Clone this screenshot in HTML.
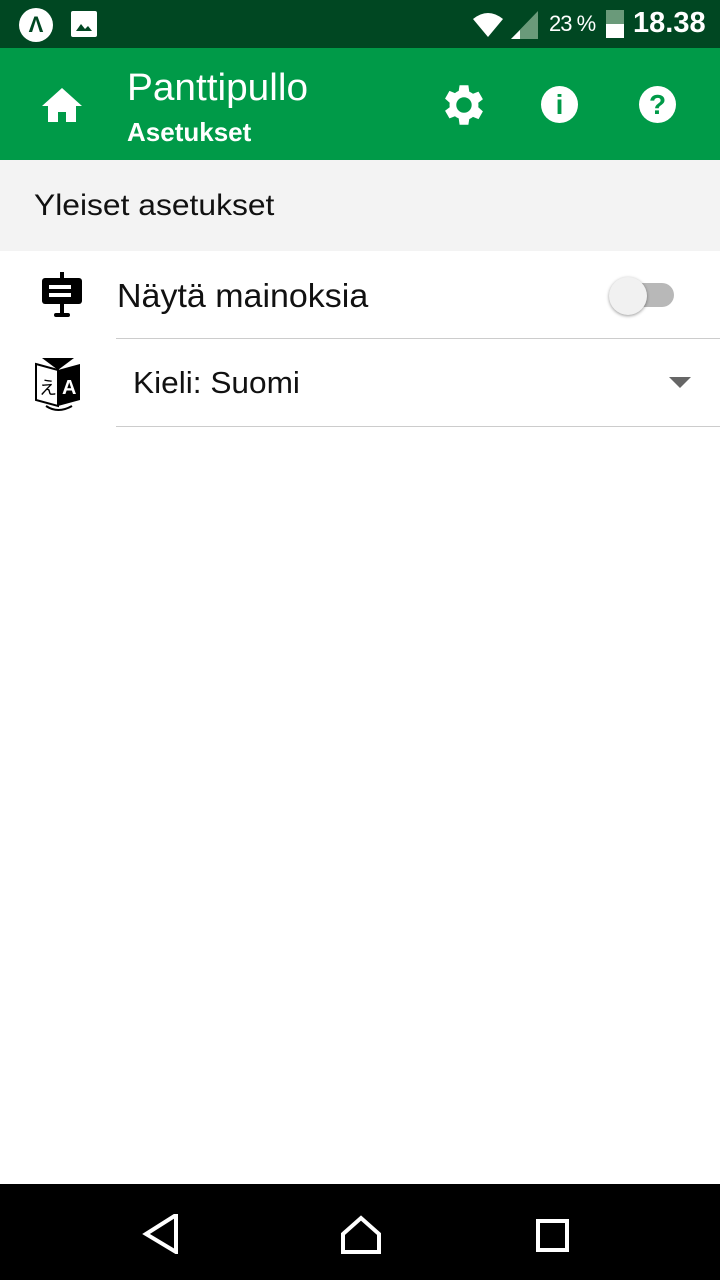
<!DOCTYPE html>
<html><head><meta charset="utf-8"><style>
body{margin:0;width:720px;height:1280px;position:relative;background:#fff;font-family:"Liberation Sans",sans-serif;overflow:hidden}
.a{position:absolute;white-space:nowrap}
</style></head><body>
<div class="a" style="left:0;top:0;width:720px;height:48px;background:#004722"></div>
<div class="a" style="left:19px;top:8px;width:34px;height:34px;border-radius:50%;background:#fff;color:#004722;font-weight:bold;font-size:22px;text-align:center;line-height:34px">Λ</div>
<div class="a" style="left:71px;top:11px;width:26px;height:26px;background:#fff;border-radius:2px"><svg width="26" height="26"><path d="M5 20 L10 13 L14 18 L17 15 L21 20Z" fill="#004722"/></svg></div>
<svg class="a" style="left:472px;top:9px" width="70" height="32"><path d="M1 10 Q16 -2 31 10 L16 28Z" fill="#fff"/><path d="M39 30 L66 2 L66 30Z" fill="#6a9a7a"/><path d="M39 30 L48 21 L48 30Z" fill="#fff"/></svg>
<div class="a" style="left:549px;top:11px;color:#fff;font-size:22px;letter-spacing:-1px">23 %</div>
<div class="a" style="left:606px;top:10px;width:18px;height:28px;background:#6a9a7a"></div>
<div class="a" style="left:606px;top:24px;width:18px;height:14px;background:#fff"></div>
<div class="a" style="left:633px;top:7px;color:#fff;font-size:29px;font-weight:bold">18.38</div>
<div class="a" style="left:0;top:48px;width:720px;height:112px;background:#009a48"></div>
<svg class="a" style="left:42px;top:86px" width="40" height="36"><path d="M20 2 L40 20 L34 20 L34 36 L24 36 L24 26 L16 26 L16 36 L6 36 L6 20 L0 20Z" fill="#fff"/></svg>
<div class="a" style="left:127px;top:67px;color:#fff;font-size:38px;transform:scaleX(1.02);transform-origin:left">Panttipullo</div>
<div class="a" style="left:127px;top:117px;color:#fff;font-size:26px;font-weight:bold">Asetukset</div>
<svg class="a" style="left:440px;top:83px" width="44" height="44" viewBox="2 2 20 20"><path fill="#fff" d="M19.4 13a7.5 7.5 0 0 0 0-2l2.1-1.6-2-3.5-2.5 1a7 7 0 0 0-1.7-1L14.9 3h-4l-.4 2.6a7 7 0 0 0-1.7 1l-2.5-1-2 3.5L6.4 11a7.5 7.5 0 0 0 0 2l-2.1 1.6 2 3.5 2.5-1a7 7 0 0 0 1.7 1l.4 2.9h4l.4-2.6a7 7 0 0 0 1.7-1l2.5 1 2-3.5zM12.9 15.5a3.5 3.5 0 1 1 0-7 3.5 3.5 0 0 1 0 7z"/></svg>
<div class="a" style="left:541px;top:86px;width:37px;height:37px;border-radius:50%;background:#fff;color:#009a48;font-weight:bold;font-size:28px;text-align:center;line-height:37px">i</div>
<div class="a" style="left:639px;top:86px;width:37px;height:37px;border-radius:50%;background:#fff;color:#009a48;font-weight:bold;font-size:28px;text-align:center;line-height:37px">?</div>
<div class="a" style="left:0;top:160px;width:720px;height:91px;background:#f3f3f3"></div>
<div class="a" style="left:34px;top:189px;font-size:30px;color:#111;transform:scaleX(1.06);transform-origin:left">Yleiset asetukset</div>
<svg class="a" style="left:40px;top:272px" width="44" height="48"><rect x="20" y="0" width="4" height="6" fill="#000"/><rect x="2" y="6" width="40" height="26" rx="3" fill="#000"/><rect x="9" y="13" width="22" height="4" fill="#fff"/><rect x="9" y="21" width="22" height="4" fill="#fff"/><rect x="20" y="32" width="4" height="10" fill="#000"/><rect x="14" y="41" width="16" height="4" rx="2" fill="#000"/></svg>
<div class="a" style="left:117px;top:277px;font-size:33px;color:#111;transform:scaleX(1.03);transform-origin:left">Näytä mainoksia</div>
<div class="a" style="left:614px;top:283px;width:60px;height:24px;border-radius:12px;background:#b8b8b8"></div>
<div class="a" style="left:609px;top:277px;width:38px;height:38px;border-radius:50%;background:#f1f1f1;box-shadow:0 1px 3px rgba(0,0,0,.4)"></div>
<div class="a" style="left:116px;top:338px;width:604px;height:1px;background:#ccc"></div>
<svg class="a" style="left:34px;top:356px" width="50" height="56"><path d="M2 8 L24 14 L24 50 L2 44Z" fill="#fff" stroke="#000" stroke-width="2"/><path d="M24 14 L46 8 L46 44 L24 50Z" fill="#000"/><path d="M8 2 L24 14 L40 2Z" fill="#000"/><text x="5" y="38" font-size="18" font-family="Noto Sans CJK JP">え</text><text x="28" y="38" font-size="20" font-weight="bold" fill="#fff">A</text><path d="M12 50 Q24 58 38 50" fill="none" stroke="#000" stroke-width="2"/></svg>
<div class="a" style="left:133px;top:365px;font-size:31px;color:#111;transform:scaleX(1.02);transform-origin:left">Kieli: Suomi</div>
<svg class="a" style="left:669px;top:377px" width="22" height="12"><path d="M0 0 L22 0 L11 11Z" fill="#666"/></svg>
<div class="a" style="left:116px;top:426px;width:604px;height:1px;background:#ccc"></div>
<div class="a" style="left:0;top:1184px;width:720px;height:96px;background:#000"></div>
<svg class="a" style="left:140px;top:1214px" width="440" height="40"><path d="M36 3 L6 22 L36 40Z" fill="none" stroke="#fff" stroke-width="4" transform="translate(0,-2)"/><path d="M203 20 L221 4 L239 20 L239 38 L203 38Z" fill="none" stroke="#fff" stroke-width="4"/><rect x="398" y="7" width="29" height="29" fill="none" stroke="#fff" stroke-width="4"/></svg>
</body></html>
